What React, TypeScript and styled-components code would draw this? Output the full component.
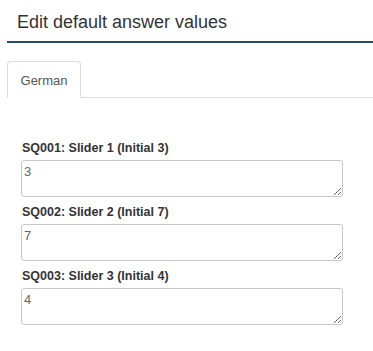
import styled, { createGlobalStyle } from 'styled-components'

const GlobalStyle = createGlobalStyle`
body {
  margin: 0;
  background: #fff;
  font-family: "Liberation Sans", Arial, sans-serif;
  overflow: hidden;
}
`

const questions = [
    { code: 'SQ001', title: 'Slider 1 (Initial 3)', value: '3' },
    { code: 'SQ002', title: 'Slider 2 (Initial 7)', value: '7' },
    { code: 'SQ003', title: 'Slider 3 (Initial 4)', value: '4' },
]

const App = () => {
    return (
        <Container>
            <GlobalStyle />
            <Header>
                <Title>Edit default answer values</Title>
            </Header>
            <TabBar>
                <Tab>German</Tab>
            </TabBar>
            <Form>
                {
                    questions.map((q) => (
                        <Field key={q.code}>
                            <Label>{q.code}: {q.title}</Label>
                            <Input defaultValue={q.value} />
                        </Field>
                    ))
                }
            </Form>
        </Container>
    )
}

export default App

const Input = styled.textarea`
display: block;
box-sizing: border-box;
width: 322px;
height: 37px;
margin: 0 0 0 -1px;
padding: 3px 2px;
border: 1px solid #c8c8c8;
border-radius: 3px;
font-family: "Liberation Sans", Arial, sans-serif;
font-size: 13px;
line-height: 15px;
color: #666;
background: #fff;
outline: none;
`

const Label = styled.div`
font-size: 12.5px;
font-weight: 700;
line-height: 17px;
color: #333;
margin-bottom: 3px;
`

const Field = styled.div`
margin-top: 7px;
`

const Form = styled.div`
padding: 35px 0 0 15px;
`

const Tab = styled.div`
box-sizing: border-box;
width: 74px;
height: 37px;
margin-bottom: -1px;
display: flex;
align-items: center;
justify-content: center;
padding-top: 1px;
font-size: 13px;
color: #555;
background: #fff;
border: 1px solid #ddd;
border-bottom-color: transparent;
border-radius: 4px 4px 0 0;
`

const TabBar = styled.div`
display: flex;
margin-top: 18px;
border-bottom: 1px solid #ddd;
`

const Title = styled.div`
font-size: 18px;
line-height: 20px;
color: #333;
`

const Header = styled.div`
padding: 12px 0 9px 10px;
border-bottom: 2px solid #2b4c63;
`

const Container = styled.div`
padding-left: 7px;
width: 366px;
height: 351px;
`
